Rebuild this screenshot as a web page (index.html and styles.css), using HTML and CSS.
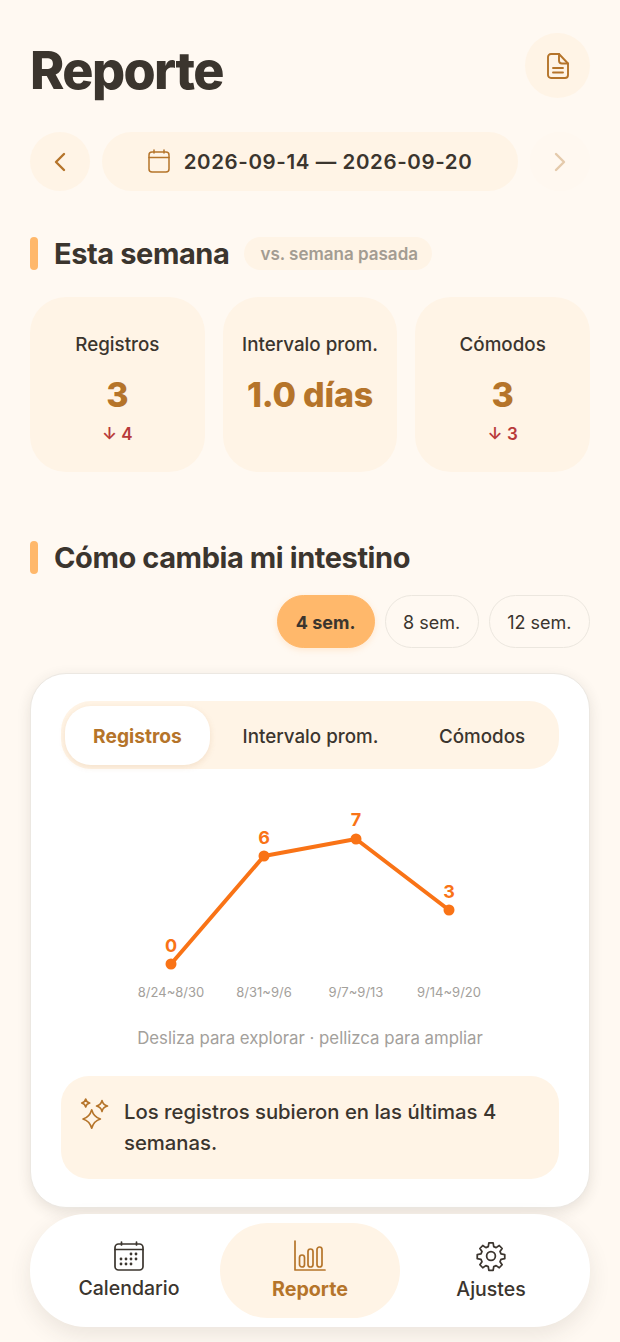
FILE: index.html
```html
<!DOCTYPE html>
<html lang="es">
<head>
  <meta charset="UTF-8">
  <title>Reporte</title>
  <meta name="viewport" content="width=device-width, initial-scale=1.0">
  <link rel="stylesheet" href="styles.css">
</head>
<body>

  <header class="top">
    <h1>Reporte</h1>
    <button class="doc-btn" aria-label="Documento">
      <svg width="24" height="28" viewBox="0 0 24 28" fill="none" stroke="#b5742a" stroke-width="1.9" stroke-linejoin="round" stroke-linecap="round">
        <path d="M5 2h8l9 9.5V23a3 3 0 0 1-3 3H5a3 3 0 0 1-3-3V5a3 3 0 0 1 3-3z"/>
        <path d="M13 2v6.5a3 3 0 0 0 3 3h6"/>
        <path d="M7 16h10M7 20.500h10"/>
      </svg>
    </button>
  </header>

  <nav class="semana-nav">
    <button class="flecha" aria-label="Anterior">
      <svg width="12" height="20" viewBox="0 0 12 20" fill="none" stroke="#b5742a" stroke-width="2.4" stroke-linecap="round" stroke-linejoin="round"><path d="M10 2 2 10l8 8"/></svg>
    </button>
    <div class="rango">
      <svg width="22" height="24" viewBox="0 0 22 24" fill="none" stroke="#b5742a" stroke-width="1.5" stroke-linecap="round" stroke-linejoin="round">
        <rect x="1" y="3" width="20" height="20" rx="3"/>
        <path d="M1 8.500h20M6 1v3M16 1v3"/>
      </svg>
      <span>2026-09-14 — 2026-09-20</span>
    </div>
    <button class="flecha flecha-off" aria-label="Siguiente">
      <svg width="12" height="20" viewBox="0 0 12 20" fill="none" stroke="#b5742a" stroke-width="2.4" stroke-linecap="round" stroke-linejoin="round"><path d="m2 2 8 8-8 8"/></svg>
    </button>
  </nav>

  <section class="esta-semana">
    <div class="seccion-titulo">
      <h2>Esta semana</h2>
      <span class="chip-vs">vs. semana pasada</span>
    </div>
    <div class="resumen">
      <div class="resumen-card">
        <p class="resumen-label">Registros</p>
        <p class="resumen-valor">3</p>
        <p class="resumen-delta">↓ 4</p>
      </div>
      <div class="resumen-card">
        <p class="resumen-label">Intervalo prom.</p>
        <p class="resumen-valor">1.0 días</p>
      </div>
      <div class="resumen-card">
        <p class="resumen-label">Cómodos</p>
        <p class="resumen-valor">3</p>
        <p class="resumen-delta">↓ 3</p>
      </div>
    </div>
  </section>

  <section class="cambios">
    <div class="seccion-titulo">
      <h2>Cómo cambia mi intestino</h2>
    </div>
    <div class="periodos">
      <button class="periodo activo">4 sem.</button>
      <button class="periodo">8 sem.</button>
      <button class="periodo">12 sem.</button>
    </div>

    <div class="grafica-card">
      <div class="tabs">
        <button class="tab activo">Registros</button>
        <button class="tab tab-medio">Intervalo prom.</button>
        <button class="tab tab-fin">Cómodos</button>
      </div>

      <svg class="grafica" width="496" height="232" viewBox="0 0 496 232">
        <polyline points="109,194 202,86 294,69 387,140" fill="none" stroke="#f97316" stroke-width="4" stroke-linejoin="round" stroke-linecap="round"/>
        <circle cx="109" cy="194" r="5.500" fill="#f97316"/>
        <circle cx="202" cy="86" r="5.500" fill="#f97316"/>
        <circle cx="294" cy="69" r="5.500" fill="#f97316"/>
        <circle cx="387" cy="140" r="5.500" fill="#f97316"/>
        <g class="punto-label">
          <text x="109" y="182">0</text>
          <text x="202" y="74">6</text>
          <text x="294" y="56">7</text>
          <text x="387" y="128">3</text>
        </g>
        <g class="eje-label">
          <text x="109" y="227">8/24~8/30</text>
          <text x="202" y="227">8/31~9/6</text>
          <text x="294" y="227">9/7~9/13</text>
          <text x="387" y="227">9/14~9/20</text>
        </g>
      </svg>

      <p class="pista">Desliza para explorar · pellizca para ampliar</p>

      <div class="nota">
        <svg class="nota-icono" width="30" height="32" viewBox="0 0 30 32" fill="none" stroke="#b5742a" stroke-width="1.600" stroke-linejoin="round">
          <path d="M12.700 12.700Q14.700 20 21.400 22 14.700 24 12.700 31.300 10.700 24 4 22 10.700 20 12.700 12.700z"/>
          <path d="M23 3.500Q24 8 28.500 9 24 10 23 14.500 22 10 17.500 9 22 8 23 3.500z"/>
          <path d="M6.700 2Q7.300 5.300 10.700 6 7.300 6.700 6.700 10 6 6.700 2.700 6 6 5.300 6.700 2z"/>
        </svg>
        <p>Los registros subieron en las últimas 4 semanas.</p>
      </div>
    </div>
  </section>

  <nav class="barra">
    <a class="barra-item">
      <svg width="30" height="30" viewBox="0 0 30 30" fill="none" stroke="#3b352e" stroke-width="1.700" stroke-linecap="round" stroke-linejoin="round">
        <rect x="1" y="3" width="28" height="26" rx="3.500"/>
        <path d="M1 8.500h28M7.500 1v3M22.500 1v3"/>
        <g fill="#3b352e" stroke="none">
          <circle cx="17" cy="13" r="1.400"/><circle cx="22" cy="13" r="1.400"/>
          <circle cx="7" cy="18" r="1.400"/><circle cx="12" cy="18" r="1.400"/><circle cx="17" cy="18" r="1.400"/><circle cx="22" cy="18" r="1.400"/>
          <circle cx="7" cy="23" r="1.400"/><circle cx="12" cy="23" r="1.400"/><circle cx="17" cy="23" r="1.400"/>
        </g>
      </svg>
      <span>Calendario</span>
    </a>
    <a class="barra-item activo">
      <svg width="32" height="32" viewBox="0 0 32 32" fill="none" stroke="#b5742a" stroke-width="1.700" stroke-linecap="round" stroke-linejoin="round">
        <path d="M1 1v29h30"/>
        <rect x="5.500" y="15" width="5" height="12" rx="2.500"/>
        <rect x="14" y="9" width="5" height="18" rx="2.500"/>
        <rect x="23" y="7" width="5" height="20" rx="2.500"/>
      </svg>
      <span>Reporte</span>
    </a>
    <a class="barra-item">
      <svg width="30" height="32" viewBox="0 0 24 24" fill="none" stroke="#3b352e" stroke-width="1.400" stroke-linecap="round" stroke-linejoin="round">
        <path d="M10.300 1.500h3.400l.5 3 1.900.8 2.500-1.700 2.300 2.400-1.700 2.400.8 1.900 3 .6v3.200l-3 .6-.8 1.900 1.700 2.400-2.300 2.400-2.500-1.700-1.900.8-.5 3h-3.400l-.5-3-1.900-.8-2.500 1.700-2.300-2.400 1.700-2.400-.8-1.900-3-.6v-3.200l3-.6.8-1.900-1.700-2.400 2.300-2.400 2.500 1.700 1.900-.8z"/>
        <circle cx="12" cy="12" r="3.500"/>
      </svg>
      <span>Ajustes</span>
    </a>
  </nav>

</body>
</html>
```

FILE: styles.css
```css
* { margin: 0; padding: 0; box-sizing: border-box; }
body { font-family: Inter, 'Noto Sans', sans-serif; background: #fff9f2; color: #3b352e; padding: 33px 30px 0; height: 1342px; overflow: hidden; }
button { font-family: inherit; border: none; background: none; color: inherit; }

.top { display: flex; justify-content: space-between; align-items: flex-start; height: 65px; }
h1 { font-size: 52px; font-weight: 800; letter-spacing: -1.6px; line-height: 76px; }
.doc-btn { width: 65px; height: 65px; border-radius: 50%; background: #fff4e6; display: flex; align-items: center; justify-content: center; }

.semana-nav { display: flex; gap: 12px; margin-top: 34px; height: 59px; }
.flecha { width: 60px; border-radius: 50%; background: #fff4e6; display: flex; align-items: center; justify-content: center; flex-shrink: 0; }
.flecha-off { background: #fff7ed; opacity: .35; }
.rango { flex: 1; border-radius: 30px; background: #fff4e6; display: flex; align-items: center; justify-content: center; gap: 14px; padding-bottom: 1px; font-size: 20.500px; font-weight: 600; letter-spacing: .6px; }

.esta-semana { margin-top: 46px; }
.seccion-titulo { display: flex; align-items: center; gap: 15px; height: 33px; padding-left: 24px; position: relative; }
.seccion-titulo::before { content: ''; position: absolute; left: 0; top: 0; width: 8px; height: 33px; border-radius: 4px; background: #ffb86b; }
h2 { font-size: 29px; font-weight: 700; letter-spacing: -.42px; line-height: 33px; }
.chip-vs { height: 33px; padding: 0 14px 0 16px; border-radius: 17px; background: #fff4e6; color: #a39c92; font-size: 17px; font-weight: 600; line-height: 34px; }

.resumen { display: grid; grid-template-columns: repeat(3, 1fr); gap: 18px; margin-top: 27px; }
.resumen-card { height: 175px; border-radius: 36px; background: #fff4e6; text-align: center; padding-top: 35px; }
.resumen-label { font-size: 18.800px; font-weight: 500; line-height: 26px; }
.resumen-valor { font-size: 34px; font-weight: 800; letter-spacing: -.2px; color: #b5742a; line-height: 42px; margin-top: 16px; }
.resumen-delta { font-size: 17px; font-weight: 600; color: #b83a3a; line-height: 24px; margin-top: 6px; }

.cambios { margin-top: 69px; }
.periodos { display: flex; justify-content: flex-end; gap: 10px; margin-top: 21px; }
.periodo { height: 53px; padding: 2px 17.500px 0; border-radius: 27px; border: 1.500px solid #ece7df; font-size: 18px; font-weight: 400; }
.periodo.activo { padding: 2px 18px 0; background: #ffb86b; border-color: #ffb86b; font-weight: 700; box-shadow: 0 2px 6px rgba(255,184,107,.25); }

.grafica-card { margin-top: 25px; height: 535px; background: white; border: 1.500px solid #ece8e2; border-radius: 36px; padding: 27px 30px 0; box-shadow: 0 4px 14px rgba(61,52,43,.12); }
.tabs { display: flex; align-items: center; height: 68px; border-radius: 30px; background: #fff4e6; padding: 0 4px; }
.tab { height: 59px; padding-top: 2px; font-size: 18.800px; font-weight: 500; }
.tab.activo { width: 145px; border-radius: 26px; background: white; color: #b5742a; font-size: 19.200px; font-weight: 700; box-shadow: 0 2px 6px rgba(181,116,42,.15); }
.tab-medio { width: 183px; margin-left: 9px; }
.tab-fin { width: 120px; margin-left: 20px; }

.grafica { display: block; margin-top: 1px; margin-left: .5px; }
.punto-label text { font-size: 18px; font-weight: 700; fill: #f97316; text-anchor: middle; }
.eje-label text { font-size: 13px; fill: #a3a09b; text-anchor: middle; }

.pista { margin-top: 24px; text-align: center; font-size: 16.800px; color: #a3a09b; line-height: 24px; }

.nota { display: flex; gap: 15px; margin-top: 26px; height: 103px; border-radius: 28px; background: #fff4e6; padding: 20px 18px; }
.nota-icono { flex-shrink: 0; margin-top: 1px; }
.nota p { font-size: 20.300px; font-weight: 500; line-height: 31px; }

.barra { display: flex; justify-content: space-between; align-items: center; margin-top: 6px; height: 113px; padding: 0 8px; border-radius: 56px; background: white; box-shadow: 0 8px 22px rgba(61,52,43,.1); }
.barra-item { flex: 1; height: 95px; border-radius: 48px; display: flex; flex-direction: column; align-items: center; justify-content: center; gap: 5px; font-size: 19.500px; font-weight: 500; }
.barra-item.activo { flex: 0 0 180px; background: #fff4e6; color: #b5742a; font-size: 19.700px; font-weight: 700; }
```
